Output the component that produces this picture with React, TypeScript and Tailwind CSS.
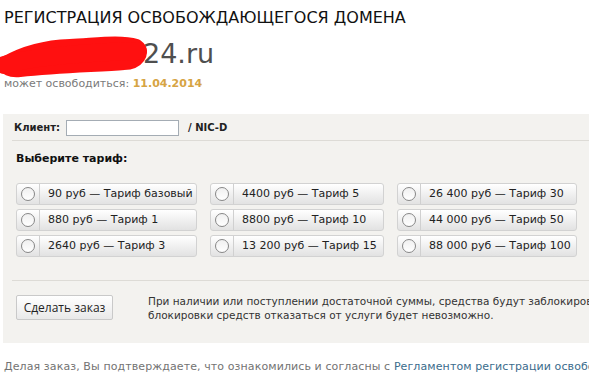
import React from "react";

const tariffs: string[][] = [
  ["90 руб — Тариф базовый", "4400 руб — Тариф 5", "26 400 руб — Тариф 30"],
  ["880 руб — Тариф 1", "8800 руб — Тариф 10", "44 000 руб — Тариф 50"],
  ["2640 руб — Тариф 3", "13 200 руб — Тариф 15", "88 000 руб — Тариф 100"],
];

function Option({ label }: { label: string }) {
  return (
    <label className="flex h-[22px] items-stretch rounded-[3px] border border-[#d2d2d2] bg-gradient-to-b from-[#ffffff] to-[#e2e2e2] cursor-pointer">
      <span className="flex w-[23px] items-center justify-center border-r border-[#d0d0d0]">
        <span className="block h-[14px] w-[14px] rounded-full border border-[#878787] bg-gradient-to-b from-[#f0f0f0] to-[#ffffff]" />
      </span>
      <span className="flex items-center pl-[8px] text-[11px] text-[#222] whitespace-nowrap">{label}</span>
    </label>
  );
}

export default function App() {
  const font = { fontFamily: '"DejaVu Sans", Verdana, sans-serif' };
  return (
    <div className="relative h-[376px] w-[589px] overflow-hidden bg-white" style={font}>
      <div className="w-[900px]">
        <h1 className="pl-[4px] pt-[8px] text-[16px] leading-[20px] text-[#111]">
          РЕГИСТРАЦИЯ ОСВОБОЖДАЮЩЕГОСЯ ДОМЕНА
        </h1>
        <div className="relative mt-[9px] h-[34px] pl-[4px] text-[27px] leading-[34px] text-[#4f4f4f]">
          <span className="inline-block w-[139px]" />
          24.ru
          <svg className="absolute left-0 top-[-3px]" width="150" height="44" viewBox="0 0 150 44">
            <path
              d="M6 30 C 20 22, 40 14, 70 13 C 95 12, 120 8, 136 13 C 143 18, 137 28, 124 28 C 100 30, 60 31, 20 35 C 10 36, 6 33, 8 30"
              fill="none"
              stroke="#ff1010"
              strokeWidth="16"
              strokeLinecap="round"
              strokeLinejoin="round"
            />
            <path d="M4 31 C 30 23, 90 18, 138 17" fill="none" stroke="#ff1010" strokeWidth="18" strokeLinecap="round" />
          </svg>
        </div>
        <div className="mt-[6px] pl-[4px] text-[11px] leading-[14px] text-[#7a7a7a]">
          может освободиться: <span className="font-bold text-[#d6a444]">11.04.2014</span>
        </div>

        <div className="ml-[3px] mt-[23px] h-[229px] bg-[#f3f2ef] pl-[9px]">
          <div className="flex h-[27px] items-center border-b border-[#dddbd6] pl-[2px] pt-[1px]">
            <span className="text-[10px] font-bold text-[#222]">Клиент:</span>
            <input className="ml-[6px] h-[16px] w-[113px] border border-[#a4acb4] bg-white" />
            <span className="ml-[9px] text-[10px] font-bold text-[#222]">/ NIC-D</span>
          </div>
          <div className="pl-[4px] pt-[10px] text-[11px] font-bold leading-[16px] text-[#111]">Выберите тариф:</div>
          <div className="mt-[16px] grid grid-cols-[181px_174px_180px] gap-x-[13px] gap-y-[4px] pl-[4px]">
            {tariffs.flat().map((t) => (
              <Option key={t} label={t} />
            ))}
          </div>
          <div className="mt-[23px] border-t border-[#dddbd6]" />
          <div className="flex pl-[4px] pt-[14px]">
            <button
              className="h-[25px] w-[97px] rounded-[2px] border border-[#c9c9c9] bg-gradient-to-b from-[#ffffff] to-[#e9e9e9] text-[12px] text-[#222]"
              style={{ fontFamily: '"Open Sans", "Liberation Sans", sans-serif' }}
            >
              Сделать заказ
            </button>
            <div className="ml-[35px] -mt-[1px] text-[10.5px] leading-[14px] text-[#333] whitespace-nowrap">
              При наличии или поступлении достаточной суммы, средства будут заблокированы, и после
              <br />
              блокировки средств отказаться от услуги будет невозможно.
            </div>
          </div>
        </div>
        <div className="mt-[17px] pl-[4px] text-[11px] leading-[14px] text-[#737373] whitespace-nowrap tracking-[0.1px]">
          Делая заказ, Вы подтверждаете, что ознакомились и согласны с{" "}
          <span className="text-[#3b6c8c]">Регламентом регистрации освобождающихся доменов</span>
        </div>
      </div>
    </div>
  );
}
